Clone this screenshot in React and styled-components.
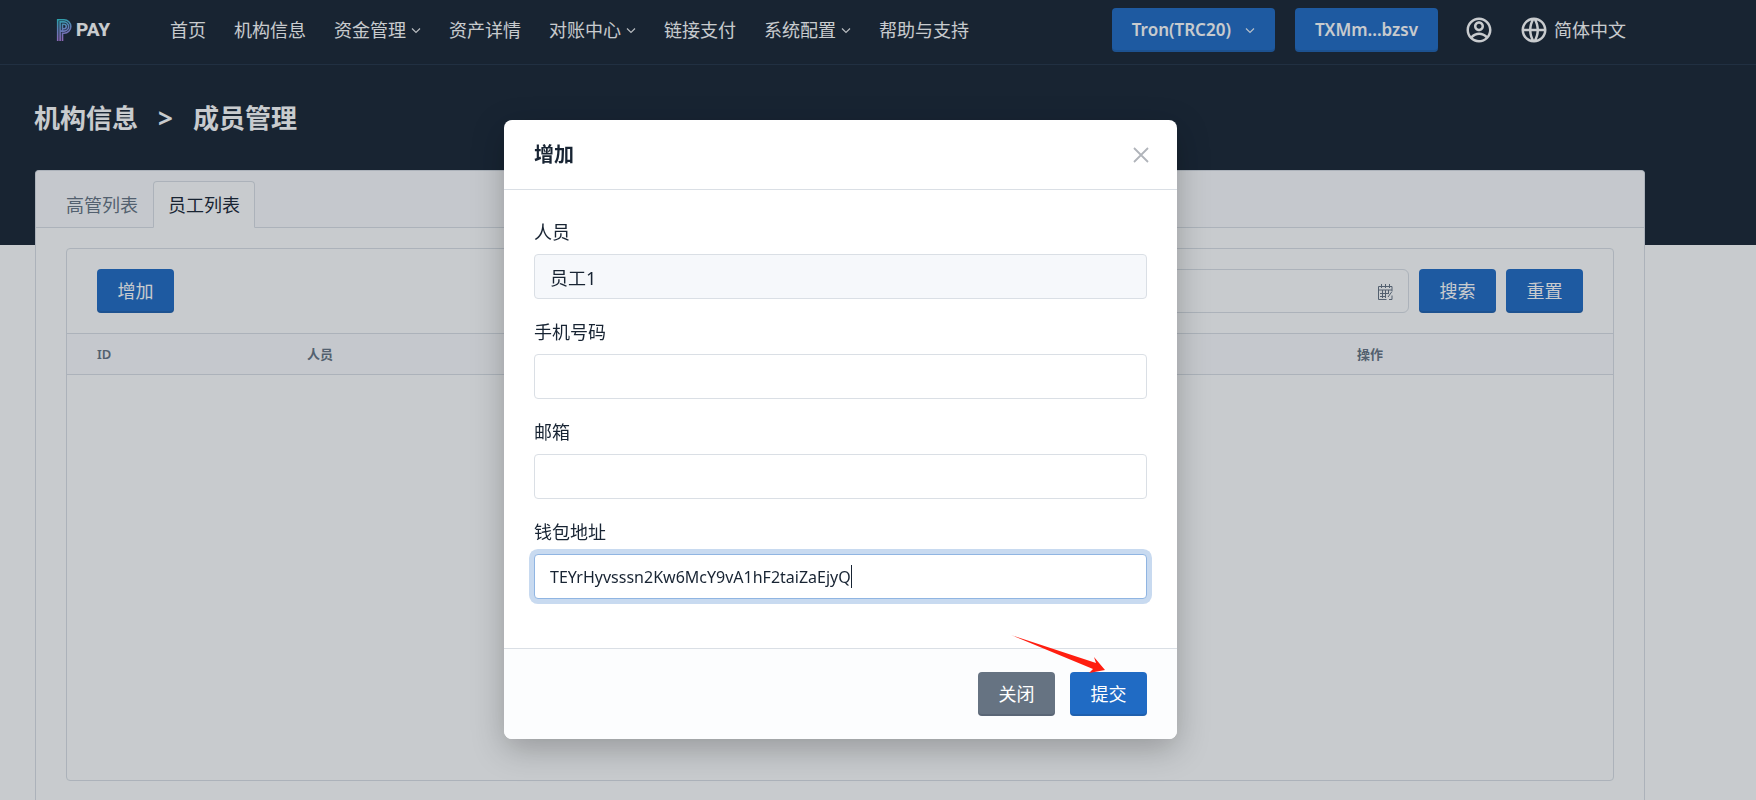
import React, { useLayoutEffect, useRef, useState } from "react";
import styled, { createGlobalStyle } from "styled-components";
import { RiAccountCircleLine, RiGlobalLine } from "react-icons/ri";

const FONT = `"Noto Sans", "Noto Sans CJK SC", sans-serif`;

const GlobalStyle = createGlobalStyle`
  *, *::before, *::after {
    box-sizing: border-box;
  }
  body {
    margin: 0;
    overflow: hidden;
    background: #fff;
    color: #182433;
    font-family: ${FONT};
    font-size: 18px;
    line-height: 26px;
  }
  button, input {
    font: inherit;
  }
`;

const navItems = [
  { label: "首页" },
  { label: "机构信息" },
  { label: "资金管理", menu: true },
  { label: "资产详情" },
  { label: "对账中心", menu: true },
  { label: "链接支付" },
  { label: "系统配置", menu: true },
  { label: "帮助与支持" },
];

const LogoMark = () => (
  <svg width="18" height="26" viewBox="0 0 18 26" aria-hidden="true">
    <defs>
      <linearGradient id="logo" gradientUnits="userSpaceOnUse" x1="4" y1="2" x2="10" y2="24">
        <stop offset="0" stopColor="#30c8cf" />
        <stop offset="0.500" stopColor="#7c95e0" />
        <stop offset="1" stopColor="#b878e0" />
      </linearGradient>
    </defs>
    <g fill="none" stroke="url(#logo)" strokeWidth="1.600">
      <path d="M2.700 24V2.700H9a6.800 6.800 0 0 1 0 13.600H7.500V24" />
      <path d="M5.100 24V4.900H9a4.600 4.600 0 0 1 0 9.200H5.100" />
      <path d="M7.500 14V7.200H9a2.300 2.300 0 0 1 0 4.600H7.500" />
    </g>
  </svg>
);

const Chevron = () => (
  <svg width="10" height="8" viewBox="0 0 10 8" fill="none" stroke="currentColor" strokeWidth="1.200" opacity="0.9">
    <path d="M1 2.500l4 4 4-4" />
  </svg>
);

const CalendarIcon = () => (
  <svg width="16" height="18" viewBox="0 0 16 18" fill="none" stroke="currentColor">
    <path d="M15 9V4.500H1.500v13h8M1.500 8H15M4.500 2v4M8.500 2v4M12.500 2v4M3 11.500h8M3 14.500h6M5.500 8v8M8.500 8v8M11.500 8v4M15 9.500L11 15M15 13.500v4H12" />
  </svg>
);

const Field = ({ id, label, focused, ...rest }) => {
  const inputRef = useRef(null);
  const [caret, setCaret] = useState(null);

  // caret sits right after the typed value
  useLayoutEffect(() => {
    if (!focused) return;
    const el = inputRef.current;
    const ctx = document.createElement("canvas").getContext("2d");
    const style = getComputedStyle(el);
    ctx.font = `${style.fontSize} ${style.fontFamily}`;
    setCaret(Math.round(parseInt(style.paddingLeft) + ctx.measureText(el.value).width) + 1);
  }, [focused]);

  return (
    <FieldGroup>
      <label htmlFor={id}>{label}</label>
      <InputWrap>
        <Input id={id} ref={inputRef} $focused={focused} {...rest} />
        {caret !== null && <Caret style={{ left: caret }} />}
      </InputWrap>
    </FieldGroup>
  );
};

const App = () => {
  return (
    <>
      <GlobalStyle />
      <Page>
        <Header>
          <Brand href="#">
            <LogoMark />
            PAY
          </Brand>
          <Nav>
            {navItems.map((item) => (
              <NavLink href="#" key={item.label}>
                {item.label}
                {item.menu && <Chevron />}
              </NavLink>
            ))}
          </Nav>
          <HeaderActions>
            <WalletButton type="button">
              Tron(TRC20)
              <Chevron />
            </WalletButton>
            <WalletButton type="button">TXMm...bzsv</WalletButton>
            <IconButton type="button" aria-label="账户">
              <RiAccountCircleLine size={30} />
            </IconButton>
            <Language href="#">
              <RiGlobalLine size={30} />
              简体中文
            </Language>
          </HeaderActions>
        </Header>

        <Title>
          <span>机构信息</span>
          <span>&gt;</span>
          <span>成员管理</span>
        </Title>

        <Card>
          <Tabs role="tablist">
            <Tab type="button" role="tab" aria-selected={false}>高管列表</Tab>
            <Tab type="button" role="tab" aria-selected $active>员工列表</Tab>
          </Tabs>
          <CardBody>
            <Panel>
              <Toolbar>
                <Button type="button">增加</Button>
                <Filters>
                  <DateField>
                    <input type="text" aria-label="日期" />
                    <CalendarIcon />
                  </DateField>
                  <Button type="button">搜索</Button>
                  <Button type="button">重置</Button>
                </Filters>
              </Toolbar>
              <Table>
                <thead>
                  <tr>
                    <Th $width="210px">ID</Th>
                    <Th>人员</Th>
                    <Th $width="286px">操作</Th>
                  </tr>
                </thead>
              </Table>
            </Panel>
          </CardBody>
        </Card>
      </Page>

      <Backdrop>
        <Modal role="dialog" aria-modal="true" aria-labelledby="modal-title">
          <ModalHeader>
            <ModalTitle id="modal-title">增加</ModalTitle>
            <CloseButton type="button" aria-label="关闭">
              <svg width="16" height="16" viewBox="0 0 16 16" stroke="currentColor" strokeWidth="1.800">
                <path d="M1 1l14 14M15 1L1 15" />
              </svg>
            </CloseButton>
          </ModalHeader>
          <ModalBody>
            <Field id="member" label="人员" defaultValue="员工1" readOnly />
            <Field id="phone" label="手机号码" type="tel" />
            <Field id="email" label="邮箱" type="email" />
            <Field
              id="wallet"
              label="钱包地址"
              focused
              defaultValue="TEYrHyvsssn2Kw6McY9vA1hF2taiZaEjyQ"
            />
          </ModalBody>
          <ModalFooter>
            <Button type="button" $secondary>关闭</Button>
            <Button type="submit">提交</Button>
            <Pointer width="96" height="40" viewBox="0 0 96 40">
              <path d="M1 1L86 29l-2-6 11 13-16 3 4-4Z" fill="#ff1e10" />
            </Pointer>
          </ModalFooter>
        </Modal>
      </Backdrop>
    </>
  );
};

const Page = styled.div`
  display: flex;
  flex-direction: column;
  height: 100vh;
  background: linear-gradient(#182433 245px, #fff 245px);
`;

const Header = styled.header`
  display: flex;
  align-items: center;
  height: 65px;
  padding: 0 130px 4px 55px;
  border-bottom: 1px solid #243447;
`;

const Brand = styled.a`
  display: flex;
  align-items: center;
  gap: 3px;
  width: 115px;
  color: #fff;
  font-family: Roboto, sans-serif;
  font-size: 19px;
  font-weight: 800;
  text-decoration: none;
`;

const Nav = styled.nav`
  display: flex;
  gap: 28px;
`;

const NavLink = styled.a`
  display: flex;
  align-items: center;
  gap: 5px;
  color: #fff;
  text-decoration: none;
  white-space: nowrap;
`;

const HeaderActions = styled.div`
  display: flex;
  align-items: center;
  margin-left: auto;
`;

const Button = styled.button`
  display: flex;
  align-items: center;
  justify-content: center;
  min-width: 77px;
  height: 44px;
  padding: 0 20px;
  border: 0;
  border-radius: 4px;
  background: ${(props) => (props.$secondary ? "#667382" : "#206bc4")};
  box-shadow: inset 0 -2px 0 rgba(24, 36, 51, 0.15);
  color: #fff;
  white-space: nowrap;
  cursor: pointer;
`;

const WalletButton = styled(Button)`
  gap: 14px;
  margin-right: 20px;
  font-size: 17px;
  font-weight: 600;
`;

const IconButton = styled.button`
  display: flex;
  margin: 0 25px 0 6px;
  padding: 0;
  border: 0;
  background: none;
  color: #fff;
  cursor: pointer;
`;

const Language = styled.a`
  display: flex;
  align-items: center;
  gap: 5px;
  color: #fff;
  text-decoration: none;
  white-space: nowrap;
`;

const Title = styled.h1`
  display: flex;
  align-items: center;
  gap: 20px;
  height: 105px;
  margin: 0;
  padding: 0 34px;
  color: #fff;
  font-size: 26px;
  font-weight: 700;
`;

const Card = styled.main`
  display: flex;
  flex: 1;
  flex-direction: column;
  margin: 0 111px 0 35px;
  border: 1px solid #dadfe5;
  border-bottom: 0;
  border-radius: 4px 4px 0 0;
  background: #fff;
`;

const Tabs = styled.div`
  display: flex;
  padding: 10px 15px 0;
  border-bottom: 1px solid #dadfe5;
  border-radius: 4px 4px 0 0;
  background: #fcfcfe;
`;

const Tab = styled.button`
  height: 47px;
  margin-bottom: -1px;
  padding: 0 14px;
  border: 1px solid ${(props) => (props.$active ? "#dadfe5" : "transparent")};
  border-bottom-color: ${(props) => (props.$active ? "#fff" : "transparent")};
  border-radius: 4px 4px 0 0;
  background: ${(props) => (props.$active ? "#fff" : "none")};
  color: ${(props) => (props.$active ? "#182433" : "#667382")};
  cursor: pointer;
`;

const CardBody = styled.div`
  display: flex;
  flex: 1;
  padding: 20px 30px 19px;
`;

const Panel = styled.section`
  flex: 1;
  border: 1px solid #dadfe5;
  border-radius: 4px;
`;

const Toolbar = styled.div`
  display: flex;
  justify-content: space-between;
  padding: 20px 30px;
`;

const Filters = styled.div`
  display: flex;
  gap: 10px;
`;

const DateField = styled.div`
  display: flex;
  align-items: center;
  width: 320px;
  padding: 0 15px;
  border: 1px solid #dadfe5;
  border-radius: 6px;
  color: #667382;

  input {
    flex: 1;
    min-width: 0;
    border: 0;
    outline: none;
    background: none;
  }
`;

const Table = styled.table`
  width: 100%;
  border-collapse: collapse;
  table-layout: fixed;
`;

const Th = styled.th`
  width: ${(props) => props.$width || "auto"};
  height: 41px;
  padding: 0 30px;
  border-top: 1px solid #dadfe5;
  border-bottom: 1px solid #dadfe5;
  background: #fcfcfe;
  color: #667382;
  font-size: 13px;
  font-weight: 600;
  text-align: left;
`;

const Backdrop = styled.div`
  position: fixed;
  inset: 0;
  display: flex;
  align-items: flex-start;
  justify-content: center;
  padding: 120px 75px 0 0;
  background: rgba(24, 36, 51, 0.24);
`;

const Modal = styled.form`
  width: 100%;
  max-width: 673px;
  border-radius: 8px;
  background: #fff;
  box-shadow: 0 10px 32px rgba(0, 0, 0, 0.25);
`;

const ModalHeader = styled.div`
  display: flex;
  align-items: center;
  justify-content: space-between;
  height: 70px;
  padding: 0 28px 0 30px;
  border-bottom: 1px solid #dadfe5;
`;

const ModalTitle = styled.h2`
  margin: 0;
  font-size: 20px;
  font-weight: 700;
`;

const CloseButton = styled.button`
  display: flex;
  padding: 0;
  border: 0;
  background: none;
  color: #b0b4ba;
  cursor: pointer;
`;

const ModalBody = styled.div`
  display: flex;
  flex-direction: column;
  gap: 20px;
  padding: 29px 30px 49px;
`;

const FieldGroup = styled.div`
  display: flex;
  flex-direction: column;
  gap: 9px;
`;

const InputWrap = styled.div`
  position: relative;
`;

const Input = styled.input`
  display: block;
  width: 100%;
  height: 45px;
  padding: 0 15px;
  border: 1px solid ${(props) => (props.$focused ? "#90b5e2" : "#dadfe5")};
  border-radius: 4px;
  outline: none;
  background: ${(props) => (props.readOnly ? "#f6f8fb" : "#fff")};
  box-shadow: ${(props) => (props.$focused ? "0 0 0 5px #c8daf0" : "none")};
  color: #182433;
  font-size: ${(props) => (props.readOnly ? "18px" : "16px")};
`;

const Caret = styled.span`
  position: absolute;
  top: 11px;
  width: 1px;
  height: 23px;
  background: #182433;
`;

const ModalFooter = styled.div`
  position: relative;
  display: flex;
  justify-content: flex-end;
  gap: 15px;
  padding: 23px 30px;
  border-top: 1px solid #dadfe5;
  border-radius: 0 0 8px 8px;
  background: #fcfdfe;
`;

const Pointer = styled.svg`
  position: absolute;
  top: -15px;
  right: 71px;
`;

export default App;
